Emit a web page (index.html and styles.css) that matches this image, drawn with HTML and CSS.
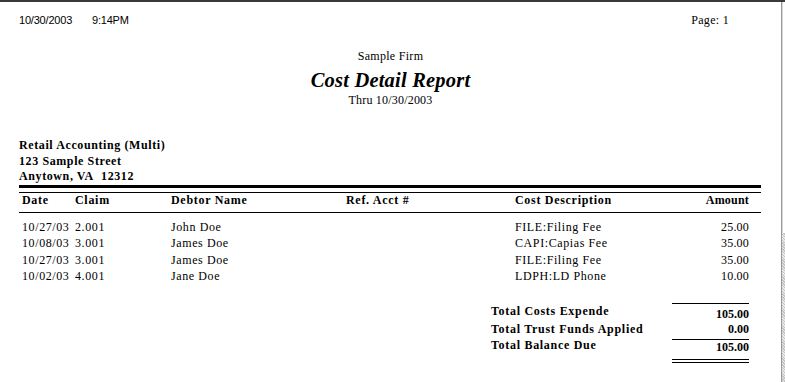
FILE: index.html
```html
<!DOCTYPE html>
<html>
<head>
<meta charset="utf-8">
<title>Cost Detail Report</title>
<link rel="stylesheet" href="styles.css">
</head>
<body>
<div class="topbar"></div>
<div class="viewer">
  <div class="sheet">
    <div class="stamp">
      <div class="stamp-left"><span class="stamp-date">10/30/2003</span><span>9:14PM</span></div>
      <div class="stamp-page">Page: 1</div>
    </div>

    <div class="firm">Sample Firm</div>
    <h1 class="title">Cost Detail Report</h1>
    <div class="thru">Thru 10/30/2003</div>

    <div class="address">
      <div class="addr-line addr-name">Retail Accounting (Multi)</div>
      <div class="addr-line">123 Sample Street</div>
      <div class="addr-line addr-last">Anytown, VA&nbsp;&nbsp;12312</div>
    </div>

    <div class="report">
      <div class="rule-thick"></div>
      <div class="rule-thin"></div>
      <div class="row head">
        <span>Date</span><span>Claim</span><span>Debtor Name</span><span>Ref. Acct #</span><span>Cost Description</span><span class="amt">Amount</span>
      </div>
      <div class="rule-head"></div>
      <div class="rows">
        <div class="row"><span>10/27/03</span><span>2.001</span><span>John Doe</span><span></span><span>FILE:Filing Fee</span><span class="amt">25.00</span></div>
        <div class="row"><span>10/08/03</span><span>3.001</span><span>James Doe</span><span></span><span>CAPI:Capias Fee</span><span class="amt">35.00</span></div>
        <div class="row"><span>10/27/03</span><span>3.001</span><span>James Doe</span><span></span><span>FILE:Filing Fee</span><span class="amt">35.00</span></div>
        <div class="row"><span>10/02/03</span><span>4.001</span><span>Jane Doe</span><span></span><span>LDPH:LD Phone</span><span class="amt">10.00</span></div>
      </div>

      <div class="totals">
        <div class="t-label t1">Total Costs Expende</div>
        <div class="t-val v1">105.00</div>
        <div class="t-label t2">Total Trust Funds Applied</div>
        <div class="t-val v2">0.00</div>
        <div class="t-label t3">Total Balance Due</div>
        <div class="t-val v3">105.00</div>
      </div>
    </div>
  </div>
  <div class="gutter">
    <div class="gutter-top"></div>
    <div class="gutter-shade"></div>
  </div>
</div>
</body>
</html>
```

FILE: styles.css
```css
html, body {
  margin: 0;
  padding: 0;
  background: #ffffff;
}

body {
  font-family: "Liberation Serif", "Times New Roman", serif;
  font-size: 12px;
  color: #000;
  width: 785px;
  height: 382px;
  overflow: hidden;
}

.topbar {
  height: 2px;
  background: #3a3a3a;
}

.viewer {
  display: flex;
  height: 380px;
}

.sheet {
  width: 782px;
  border-right: 1px solid #9a9a9a;
  box-sizing: border-box;
}

.gutter {
  flex: 1;
  display: flex;
  flex-direction: column;
}

.gutter-top {
  height: 231px;
  background: #ffffff;
  border-left: 1px solid #d8d8d8;
}

.gutter-shade {
  flex: 1;
  background-color: #e8e8e8;
  background-image: repeating-linear-gradient(45deg, #c4c4c4 0 1px, transparent 1px 2px);
}

/* print stamp line */
.stamp {
  display: flex;
  justify-content: space-between;
  align-items: flex-end;
  margin-top: 11px;
  padding: 0 52px 0 19px;
  height: 14px;
  line-height: 14px;
}

.stamp-left {
  font-family: "Liberation Sans", Arial, sans-serif;
  font-size: 11px;
  letter-spacing: -0.2px;
}

.stamp-date {
  display: inline-block;
  width: 73px;
}

.stamp-page {
  font-size: 12px;
  letter-spacing: 0.3px;
}

/* report heading */
.firm {
  text-align: center;
  margin-top: 22px;
  line-height: 14px;
  letter-spacing: 0.3px;
}

.title {
  margin: 6px 0 0;
  text-align: center;
  font-size: 20.5px;
  font-style: italic;
  font-weight: bold;
  line-height: 22px;
  letter-spacing: 0.2px;
}

.thru {
  text-align: center;
  line-height: 14px;
  margin-top: 2px;
  letter-spacing: 0.2px;
}

/* firm address */
.address {
  margin-top: 30px;
  padding-left: 19px;
  font-weight: bold;
  letter-spacing: 0.6px;
}

.addr-line {
  line-height: 15px;
}

.addr-name {
  line-height: 17px;
}

.addr-last {
  line-height: 14px;
}

/* detail table */
.report {
  margin-left: 19px;
  width: 742px;
}

.rule-thick {
  margin-top: 2px;
  height: 3px;
  background: #000;
}

.rule-thin {
  margin-top: 4px;
  height: 1px;
  background: #000;
}

.rule-head {
  height: 1px;
  background: #000;
}

.row {
  display: grid;
  grid-template-columns: 53px 96px 175px 169px 1fr 80px;
  padding: 0 12px 0 3px;
  line-height: 16.4px;
  height: 16.4px;
  letter-spacing: 0.6px;
}

.row span {
  white-space: nowrap;
}

.row.head {
  font-weight: bold;
  letter-spacing: 0.7px;
  line-height: 15px;
  height: 15px;
  margin-bottom: 4px;
}

.amt {
  text-align: right;
  letter-spacing: 0.2px;
}

.rows {
  padding-top: 6px;
}

/* summary totals */
.totals {
  display: grid;
  grid-template-columns: 181px 77px;
  margin-top: 18px;
  margin-left: 472px;
  font-weight: bold;
  letter-spacing: 0.7px;
}

.t-label {
  line-height: 14px;
}

.t1 {
  padding-top: 1px;
}

.t3 {
  margin-top: -2px;
}

.t-val {
  text-align: right;
  line-height: 14px;
  letter-spacing: 0;
}

.v1 {
  border-top: 1px solid #000;
  padding-top: 3px;
  box-sizing: border-box;
  height: 19px;
}

.v2 {
  padding-bottom: 3px;
  border-bottom: 1px solid #000;
}

.v3 {
  padding-bottom: 5px;
  border-bottom: 4px double #000;
}
```
